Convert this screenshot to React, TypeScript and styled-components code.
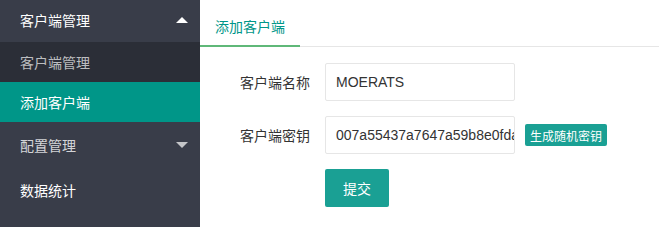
import React from 'react'
import styled, { createGlobalStyle } from 'styled-components'

const GlobalStyle = createGlobalStyle`
  html, body {
    margin: 0;
    padding: 0;
    background: #fff;
    font-family: "Microsoft YaHei", "Liberation Sans", "Noto Sans CJK SC", sans-serif;
    font-size: 14px;
    color: #333;
  }
  * { box-sizing: border-box; }
`

const Layout = styled.div`
  display: flex;
  width: 659px;
  height: 227px;
  overflow: hidden;
`

const Side = styled.nav`
  width: 200px;
  flex-shrink: 0;
  background: #393d49;
  margin-top: -3px;
  height: 230px;
`

const NavItem = styled.div`
  display: flex;
  align-items: center;
  justify-content: space-between;
  height: 45px;
  padding: 0 12px 0 20px;
  color: rgba(255, 255, 255, 0.8);
  font-size: 14px;
`

const Arrow = styled.span<{ $up?: boolean }>`
  width: 0;
  height: 0;
  border-left: 6px solid transparent;
  border-right: 6px solid transparent;
  ${(p) =>
    p.$up
      ? 'border-bottom: 6px solid #fff;'
      : 'border-top: 6px solid rgba(255,255,255,0.7);'}
`

const Child = styled.div<{ $active?: boolean }>`
  height: 40px;
  display: flex;
  align-items: center;
  padding-left: 20px;
  font-size: 14px;
  background: ${(p) => (p.$active ? '#009688' : '#2b2e37')};
  color: ${(p) => (p.$active ? '#fff' : 'rgba(255,255,255,0.7)')};
`

const Main = styled.main`
  flex: 1;
  margin-top: 7px;
`

const TabBar = styled.div`
  display: flex;
  height: 40px;
  border-bottom: 1px solid #e6e6e6;
`

const Tab = styled.div<{ $active?: boolean }>`
  padding: 0 15px;
  line-height: 40px;
  color: ${(p) => (p.$active ? '#009688' : '#333')};
  border-bottom: ${(p) => (p.$active ? '2px solid #5fb878' : 'none')};
  margin-bottom: -1px;
`

const Form = styled.form`
  display: flex;
  flex-direction: column;
  gap: 15px;
  padding: 16px 0 0 25px;
`

const Row = styled.div`
  display: flex;
  align-items: center;
`

const Label = styled.label`
  width: 100px;
  padding-right: 15px;
  text-align: right;
  color: #333;
`

const Input = styled.input`
  width: 190px;
  height: 38px;
  border: 1px solid #e6e6e6;
  border-radius: 2px;
  padding: 0 0 0 10px;
  font-family: "Liberation Sans", Arial, sans-serif;
  font-size: 14px;
  color: #333;
  outline: none;
`

const Button = styled.button<{ $size?: 'xs' }>`
  border: none;
  border-radius: 2px;
  background: #1aa094;
  color: #fff;
  font-family: inherit;
  cursor: pointer;
  ${(p) =>
    p.$size === 'xs'
      ? 'height: 22px; padding: 0 5px; font-size: 12px; margin-left: 10px;'
      : 'height: 38px; padding: 0 18px; font-size: 14px; margin-left: 100px;'}
`

export default function App() {
  return (
    <Layout>
      <GlobalStyle />
      <Side>
        <NavItem>
          <span style={{ color: '#fff' }}>客户端管理</span>
          <Arrow $up />
        </NavItem>
        <Child>客户端管理</Child>
        <Child $active>添加客户端</Child>
        <NavItem>
          <span>配置管理</span>
          <Arrow />
        </NavItem>
        <NavItem>
          <span style={{ color: '#fff' }}>数据统计</span>
        </NavItem>
      </Side>
      <Main>
        <TabBar>
          <Tab $active>添加客户端</Tab>
        </TabBar>
        <Form onSubmit={(e) => e.preventDefault()}>
          <Row>
            <Label>客户端名称</Label>
            <Input defaultValue="MOERATS" />
          </Row>
          <Row>
            <Label>客户端密钥</Label>
            <Input defaultValue="007a55437a7647a59b8e0fda3c1e2b94" />
            <Button type="button" $size="xs">生成随机密钥</Button>
          </Row>
          <Row>
            <Button type="submit">提交</Button>
          </Row>
        </Form>
      </Main>
    </Layout>
  )
}
